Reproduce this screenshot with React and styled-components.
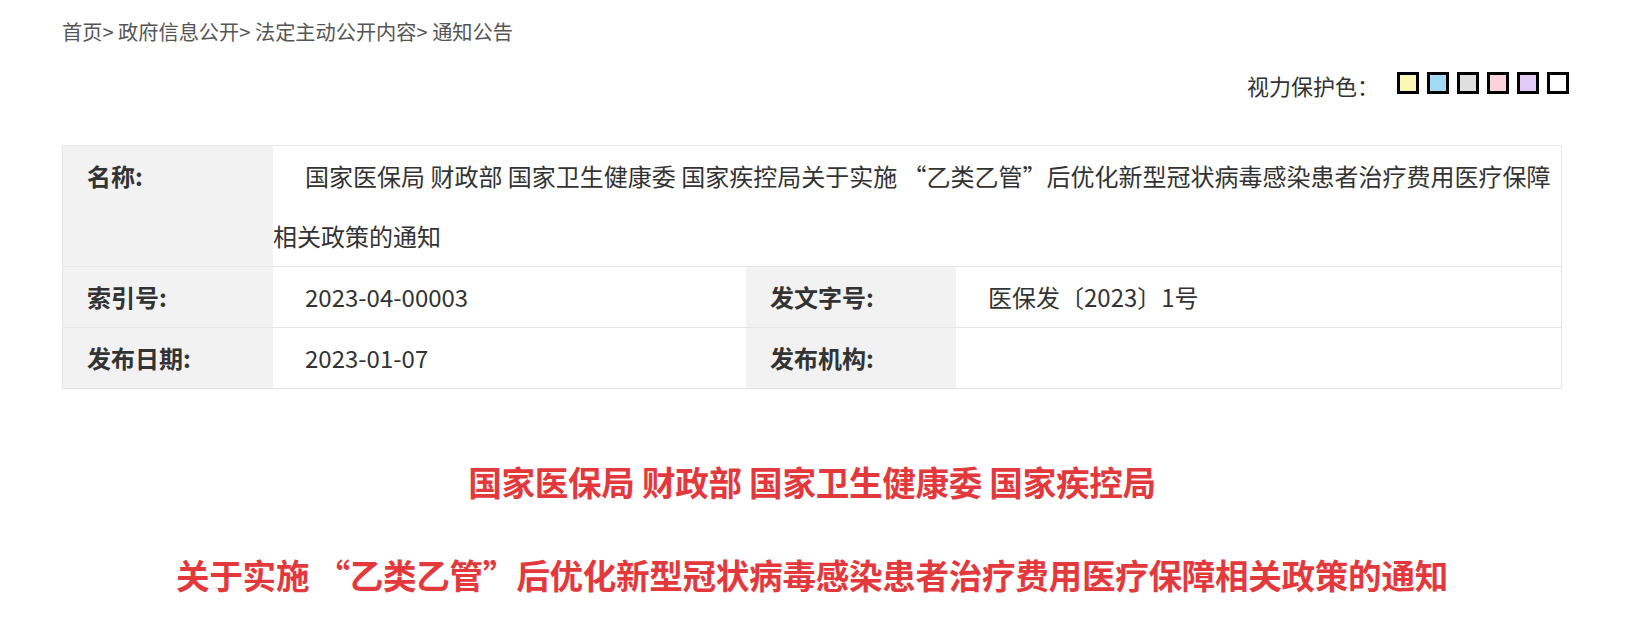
import React from "react";
import styled, { createGlobalStyle } from "styled-components";

const GlobalStyle = createGlobalStyle`
  body {
    margin: 0;
    background: #fff;
    font-family: "Noto Sans CJK SC", "Microsoft YaHei", sans-serif;
    color: #333;
  }
`;

const Page = styled.div`
  width: 1500px;
  margin-left: 62px;
`;

const Crumbs = styled.div`
  padding-top: 20px;
  font-size: 20.2px;
  line-height: 24px;
  color: #555;
`;

const Protect = styled.div`
  display: flex;
  justify-content: flex-end;
  align-items: center;
  margin-top: 25px;
  margin-right: -7px;
  height: 28px;
`;

const ProtectLabel = styled.span`
  font-size: 22px;
  color: #333;
  margin-right: 18px;
  line-height: 28px;
  position: relative;
  top: 2px;
`;

const Swatches = styled.div`
  display: flex;
  gap: 8px;
`;

const Swatch = styled.span`
  width: 16px;
  height: 16px;
  border: 3px solid #000;
  background: ${props => props.color};
  cursor: pointer;
`;

const Table = styled.div`
  margin-top: 48px;
  border: 1px solid #e6e6e6;
`;

const Row = styled.div`
  display: flex;
  & + & {
    border-top: 1px solid #e6e6e6;
  }
`;

const Label = styled.div`
  flex: 0 0 ${props => props.width || 210}px;
  background: #f2f2f2;
  padding-left: 24px;
  box-sizing: border-box;
  font-size: 24px;
  font-weight: bold;
  line-height: 60px;
  color: #333;
`;

const Value = styled.div`
  flex: ${props => (props.width ? `0 0 ${props.width}px` : "1")};
  text-indent: 32px;
  font-size: 24px;
  line-height: 60px;
  color: #333;
`;

const Titles = styled.div`
  margin-top: 68px;
  text-align: center;
  color: #e4393c;
  font-size: 33.6px;
  font-weight: bold;
`;

const TitleLine = styled.div`
  line-height: 50px;
  letter-spacing: -0.3px;
  & + & {
    margin-top: 43px;
  }
`;

const swatchColors = ["#faf7b5", "#a0daf4", "#dfdfdf", "#fad4dc", "#e4caf7", "#ffffff"];

export default function App() {
  return (
    <>
      <GlobalStyle />
      <Page>
        <Crumbs>首页&gt; 政府信息公开&gt; 法定主动公开内容&gt; 通知公告</Crumbs>
        <Protect>
          <ProtectLabel>视力保护色：</ProtectLabel>
          <Swatches>
            {swatchColors.map((c, key) => (
              <Swatch color={c} key={key} />
            ))}
          </Swatches>
        </Protect>
        <Table>
          <Row>
            <Label>名称:</Label>
            <Value>
              国家医保局 财政部 国家卫生健康委 国家疾控局关于实施 “乙类乙管”后优化新型冠状病毒感染患者治疗费用医疗保障相关政策的通知
            </Value>
          </Row>
          <Row>
            <Label>索引号:</Label>
            <Value width={473}>2023-04-00003</Value>
            <Label>发文字号:</Label>
            <Value>医保发〔2023〕1号</Value>
          </Row>
          <Row>
            <Label>发布日期:</Label>
            <Value width={473}>2023-01-07</Value>
            <Label>发布机构:</Label>
            <Value></Value>
          </Row>
        </Table>
        <Titles>
          <TitleLine>国家医保局 财政部 国家卫生健康委 国家疾控局</TitleLine>
          <TitleLine>关于实施 “乙类乙管”后优化新型冠状病毒感染患者治疗费用医疗保障相关政策的通知</TitleLine>
        </Titles>
      </Page>
    </>
  );
}
